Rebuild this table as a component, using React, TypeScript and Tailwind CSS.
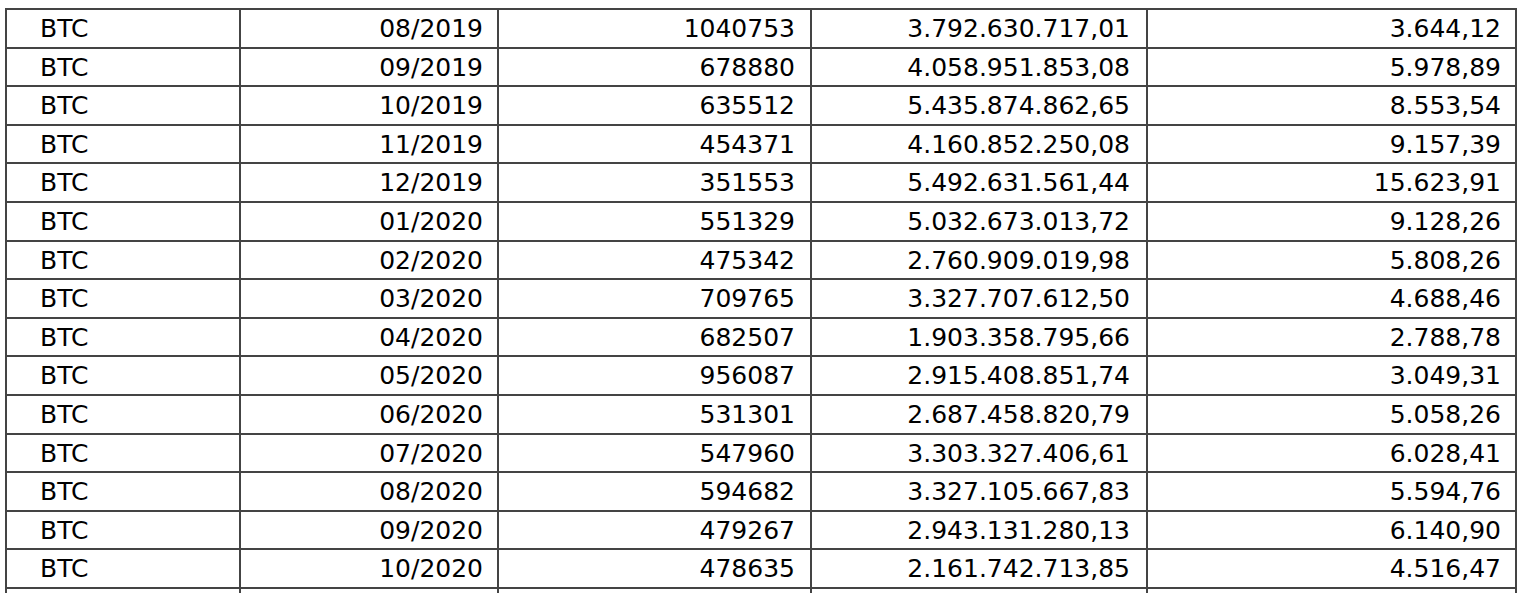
const rows: [string, string, string, string, string][] = [
  ['BTC', '08/2019', '1040753', '3.792.630.717,01', '3.644,12'],
  ['BTC', '09/2019', '678880', '4.058.951.853,08', '5.978,89'],
  ['BTC', '10/2019', '635512', '5.435.874.862,65', '8.553,54'],
  ['BTC', '11/2019', '454371', '4.160.852.250,08', '9.157,39'],
  ['BTC', '12/2019', '351553', '5.492.631.561,44', '15.623,91'],
  ['BTC', '01/2020', '551329', '5.032.673.013,72', '9.128,26'],
  ['BTC', '02/2020', '475342', '2.760.909.019,98', '5.808,26'],
  ['BTC', '03/2020', '709765', '3.327.707.612,50', '4.688,46'],
  ['BTC', '04/2020', '682507', '1.903.358.795,66', '2.788,78'],
  ['BTC', '05/2020', '956087', '2.915.408.851,74', '3.049,31'],
  ['BTC', '06/2020', '531301', '2.687.458.820,79', '5.058,26'],
  ['BTC', '07/2020', '547960', '3.303.327.406,61', '6.028,41'],
  ['BTC', '08/2020', '594682', '3.327.105.667,83', '5.594,76'],
  ['BTC', '09/2020', '479267', '2.943.131.280,13', '6.140,90'],
  ['BTC', '10/2020', '478635', '2.161.742.713,85', '4.516,47'],
  ['', '', '', '', ''],
];

const cell = 'flex items-center h-full border-r-2 border-[#444] pb-1';

export default function App() {
  return (
    <div className="bg-white h-[593px] overflow-hidden pl-[5px] pt-[8px] font-['DejaVu_Sans',Verdana,sans-serif] text-[25px] text-black">
      <div className="w-[1512px] border-t-2 border-l-2 border-[#444]">
        {rows.map((r, i) => (
          <div
            key={i}
            className="grid grid-cols-[234px_258px_313px_336px_369px] h-[38.6px] border-b-2 border-[#444]"
          >
            <div className={`${cell} pl-[33px]`}>{r[0]}</div>
            <div className={`${cell} justify-end pr-[14px]`}>{r[1]}</div>
            <div className={`${cell} justify-end pr-[15px]`}>{r[2]}</div>
            <div className={`${cell} justify-end pr-[16px]`}>{r[3]}</div>
            <div className={`${cell} justify-end pr-[14px]`}>{r[4]}</div>
          </div>
        ))}
      </div>
    </div>
  );
}
